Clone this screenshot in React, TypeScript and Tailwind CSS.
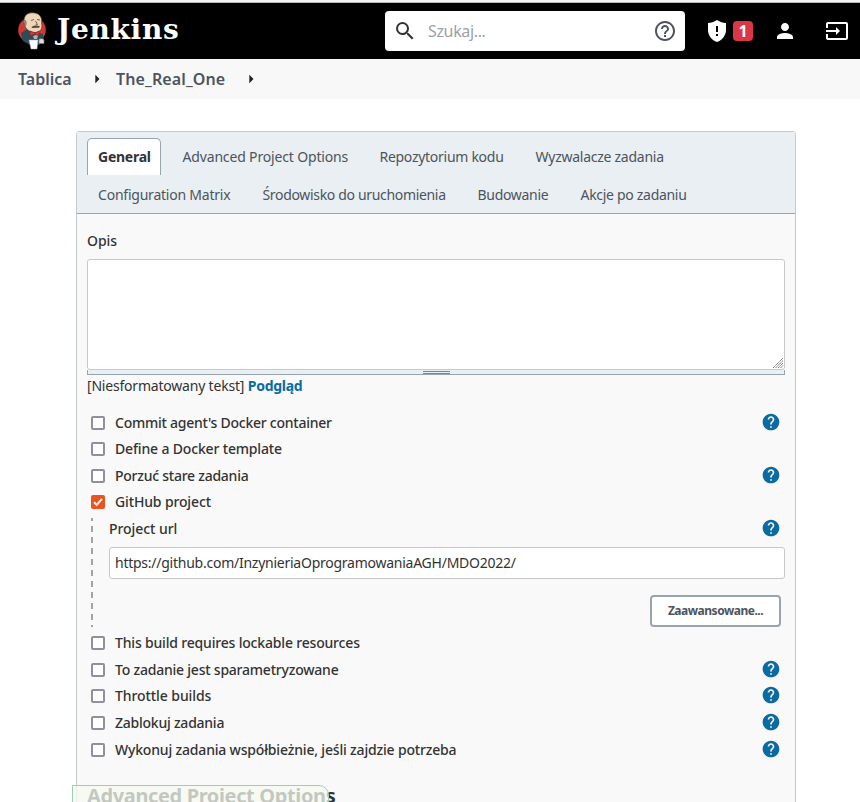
import { MdArrowRight, MdHelp, MdHelpOutline, MdInput, MdPerson, MdSearch } from "react-icons/md";

type Option = { label: string; track: string; height: string; help?: boolean; checked?: boolean };

const firstTabs = [
  { label: "Advanced Project Options", box: "w-[187px]", track: "tracking-[-0.16px]" },
  { label: "Repozytorium kodu", box: "w-[146px]", track: "tracking-[-0.28px]" },
  { label: "Wyzwalacze zadania", box: "w-[150px]", track: "tracking-[-0.26px]" },
];
const secondTabs = [
  { label: "Configuration Matrix", box: "w-[154.5px]", track: "tracking-[-0.22px]" },
  { label: "Środowisko do uruchomienia", box: "w-[205px]", track: "tracking-[-0.33px]" },
  { label: "Budowanie", box: "w-[93px]", track: "tracking-[-0.3px]" },
  { label: "Akcje po zadaniu", box: "w-[130px]", track: "tracking-[-0.3px]" },
];
const topOptions: Option[] = [
  { label: "Commit agent's Docker container", track: "tracking-[-0.25px]", height: "h-[26px]", help: true },
  { label: "Define a Docker template", track: "tracking-[-0.16px]", height: "h-[27px]" },
  { label: "Porzuć stare zadania", track: "tracking-[-0.25px]", height: "h-[26px]", help: true },
  { label: "GitHub project", track: "tracking-[-0.14px]", height: "h-[26px]", checked: true },
];
const bottomOptions: Option[] = [
  { label: "This build requires lockable resources", track: "tracking-[-0.18px]", height: "h-[27px]" },
  { label: "To zadanie jest sparametryzowane", track: "tracking-[-0.22px]", height: "h-[26px]", help: true },
  { label: "Throttle builds", track: "tracking-[-0.08px]", height: "h-[27px]", help: true },
  { label: "Zablokuj zadania", track: "tracking-[-0.24px]", height: "h-[27px]", help: true },
  { label: "Wykonuj zadania współbieżnie, jeśli zajdzie potrzeba", track: "tracking-[-0.18px]", height: "h-[26px]", help: true },
];

function Butler() {
  return (
    <svg width="28" height="38" viewBox="0 0 28 38" className="ml-[18px] shrink-0">
      <ellipse cx="14" cy="18" rx="13.8" ry="13" fill="#d33833" />
      <path d="M3 21 L9 17 L18 20 L25 22 L26 28 L21 33 L12 33 L5 29Z" fill="#2f4b5b" />
      <path d="M6 9 C6 3 10 .6 15 .8 C21 1 24.5 5 23.6 11 C25 17 22 20.5 17 20.5 C11 20 8 17 7 14Z" fill="#f0d6b7" stroke="#49403a" strokeWidth=".7" />
      <path d="M6 8 C8 7 9 9 8.6 13 L7 14Z" fill="#8d8880" />
      <path d="M13 8.5 l3 -1 M19 7.5 l3 .5 M17.5 9 l2 3.5 -2 .5" fill="none" stroke="#5d544c" strokeWidth=".9" />
      <path d="M13.5 15 Q17 12.5 22 14.2 L21 15.8 L14 16Z" fill="#554c45" />
      <path d="M12 19 l5 2 4-2 v5 l-4-2 -5 2Z" fill="#d33833" stroke="#7d1f1c" strokeWidth=".5" />
      <path d="M15 24 l3 -1 2 1 -1 3 h-3Z" fill="#9fb6c2" />
      <path d="M11 28 h9 l-1 9 h-6Z" fill="#fff" stroke="#aaa" strokeWidth=".5" />
      <path d="M21 27 q5 -1 5 1.5 v3 h-5Z" fill="#ddd" stroke="#777" strokeWidth=".6" />
    </svg>
  );
}

function Help() {
  return <MdHelp size={20} color="#0b6aa2" className="mr-[4px] shrink-0" />;
}

function OptionRow({ option }: { option: Option }) {
  return (
    <div className={`flex items-start ${option.height}`}>
      <span className={`mt-[6px] ml-1 flex size-[14px] shrink-0 items-center justify-center rounded-[2px] ${option.checked ? "bg-[#e95420]" : "border-2 border-[#8f8f9d] bg-white"}`}>
        {option.checked && (
          <svg width="14" height="14" viewBox="0 0 14 14"><path d="M3 7.2 L5.7 9.8 L11 3.8" fill="none" stroke="white" strokeWidth="1.9" /></svg>
        )}
      </span>
      <span className={`mt-[3px] ml-[10px] grow font-medium whitespace-nowrap ${option.track}`}>{option.label}</span>
      {option.help && <span className="mt-[2px]"><Help /></span>}
    </div>
  );
}

export default function App() {
  return (
    <div className="relative h-[802px] w-[860px] overflow-hidden bg-white font-['Noto_Sans','Open_Sans',sans-serif] text-[14px] leading-5 text-[#333]">
      <div className="h-[3px] border-b border-[#b8b8b8] bg-[#f4f4f4]" />
      <header className="flex h-14 items-center bg-black text-white">
        <Butler />
        <span className="-mt-[3px] ml-[11px] w-[328px] font-['DejaVu_Serif',serif] text-[28px] leading-8 font-bold tracking-[0.7px]">Jenkins</span>
        <div className="flex h-10 w-[300px] shrink-0 items-center rounded bg-white pr-2 pl-2">
          <MdSearch size={24} color="#333" />
          <span className="ml-[11px] grow text-[16px] tracking-[-0.35px] text-[#9ba1a8]">Szukaj...</span>
          <MdHelpOutline size={24} color="#4d545d" />
        </div>
        <svg width="24" height="24" viewBox="0 0 24 24" className="ml-5 shrink-0">
          <path d="M12 1 C9 3 6 4 3 4 V11 C3 16.5 7 21.5 12 23 C17 21.5 21 16.5 21 11 V4 C18 4 15 3 12 1Z" fill="white" />
          <path d="M11 7h2v6h-2Z M11 15h2v2h-2Z" fill="black" />
        </svg>
        <span className="ml-1 flex size-5 shrink-0 items-center justify-center rounded bg-[#dc3545] text-[16px] font-bold">1</span>
        <MdPerson size={24} className="ml-5 shrink-0" />
        <MdInput size={24} className="ml-7 shrink-0" />
      </header>
      <nav className="flex h-10 items-center bg-[#f8f8f8] pl-[18px] text-[16px] font-semibold text-[#4d545d]">
        <span className="w-[69px]">Tablica</span>
        <MdArrowRight size={20} color="#222" className="shrink-0" />
        <span className="ml-[9px] w-[125px] tracking-[0.12px]">The_Real_One</span>
        <MdArrowRight size={20} color="#222" className="shrink-0" />
      </nav>
      <main className="mt-8 ml-[76px] h-[700px] w-[720px] rounded-t-[3px] border border-[#c5cbcd] bg-[#f9f9f9]">
        <div className="h-[82px] border-b border-[#98a4ae] bg-[#e9eff2] pt-[6px] pl-[10px] text-[#4d545d]">
          <div className="flex h-[37px] gap-[10px]">
            <div className="w-[74px] rounded-t-[5px] border border-b-0 border-[#98a4ae] bg-white pt-2 pl-[10px] font-bold tracking-[-0.25px] text-[#333]">General</div>
            {firstTabs.map((tab) => <div key={tab.label} className={`${tab.box} ${tab.track} pt-[9px] pl-[11.5px] whitespace-nowrap`}>{tab.label}</div>)}
          </div>
          <div className="flex h-[37px] gap-[10px]">
            {secondTabs.map((tab) => <div key={tab.label} className={`${tab.box} ${tab.track} pt-[10px] pl-[11px] whitespace-nowrap`}>{tab.label}</div>)}
          </div>
        </div>
        <div className="px-[10px] pt-[17px]">
          <div className="h-[28px] font-medium tracking-[-0.1px]">Opis</div>
          <div className="flex h-[111px] items-end justify-end rounded-[3px] border border-[#c5c9cb] bg-white">
            <svg width="12" height="12" viewBox="0 0 12 12"><path d="M1 11L11 1M3.5 11L11 3.5M6 11L11 6M8.5 11L11 8.5" stroke="#777" strokeWidth="1" strokeDasharray="1.6 .3" /></svg>
          </div>
          <div className="flex h-[5px] items-start justify-center border border-t-0 border-[#98a4ae] bg-[#e9eff2]">
            <span className="mt-px h-[3px] w-[27px] border-y border-[#858585]" />
          </div>
          <div className="h-[35px] pt-px"><span className="tracking-[-0.2px]">[Niesformatowany tekst]</span> <span className="font-bold tracking-[-0.3px] text-[#0b6aa2]">Podgląd</span></div>
          {topOptions.map((option) => <OptionRow key={option.label} option={option} />)}
          <div className="flex h-[115px]">
            <svg width="2" height="109" className="mt-[3px] ml-1 shrink-0"><path d="M1 0V109" stroke="#a3a3a3" strokeWidth="2" strokeDasharray="6 5" strokeDashoffset="3" /></svg>
            <div className="ml-4 flex grow flex-col">
              <div className="flex h-[27px] items-center"><span className="grow font-medium tracking-[-0.06px]">Project url</span><span className="-mt-px"><Help /></span></div>
              <div className="mt-[5px] h-8 rounded-[3px] border border-[#c5c9cb] bg-white pt-[5px] pl-[5px] tracking-[-0.25px]">https://github.com/InzynieriaOprogramowaniaAGH/MDO2022/</div>
              <button className="mt-4 mr-1 h-8 w-[131px] shrink-0 self-end rounded-[4px] border-2 border-[#98a4ae] bg-white text-[12px] font-bold tracking-[-0.48px] text-[#4d545d]">Zaawansowane...</button>
            </div>
          </div>
          {bottomOptions.map((option) => <OptionRow key={option.label} option={option} />)}
          <h2 className="mt-[19px] text-[20px] leading-7 font-bold tracking-[-0.37px]">Advanced Project Options</h2>
        </div>
      </main>
      <div className="absolute top-[785px] left-[72px] h-[30px] w-[257px] rounded-tr-[10px] border border-[#9fcdb3] bg-[#f4f9f0]/75" />
    </div>
  );
}
